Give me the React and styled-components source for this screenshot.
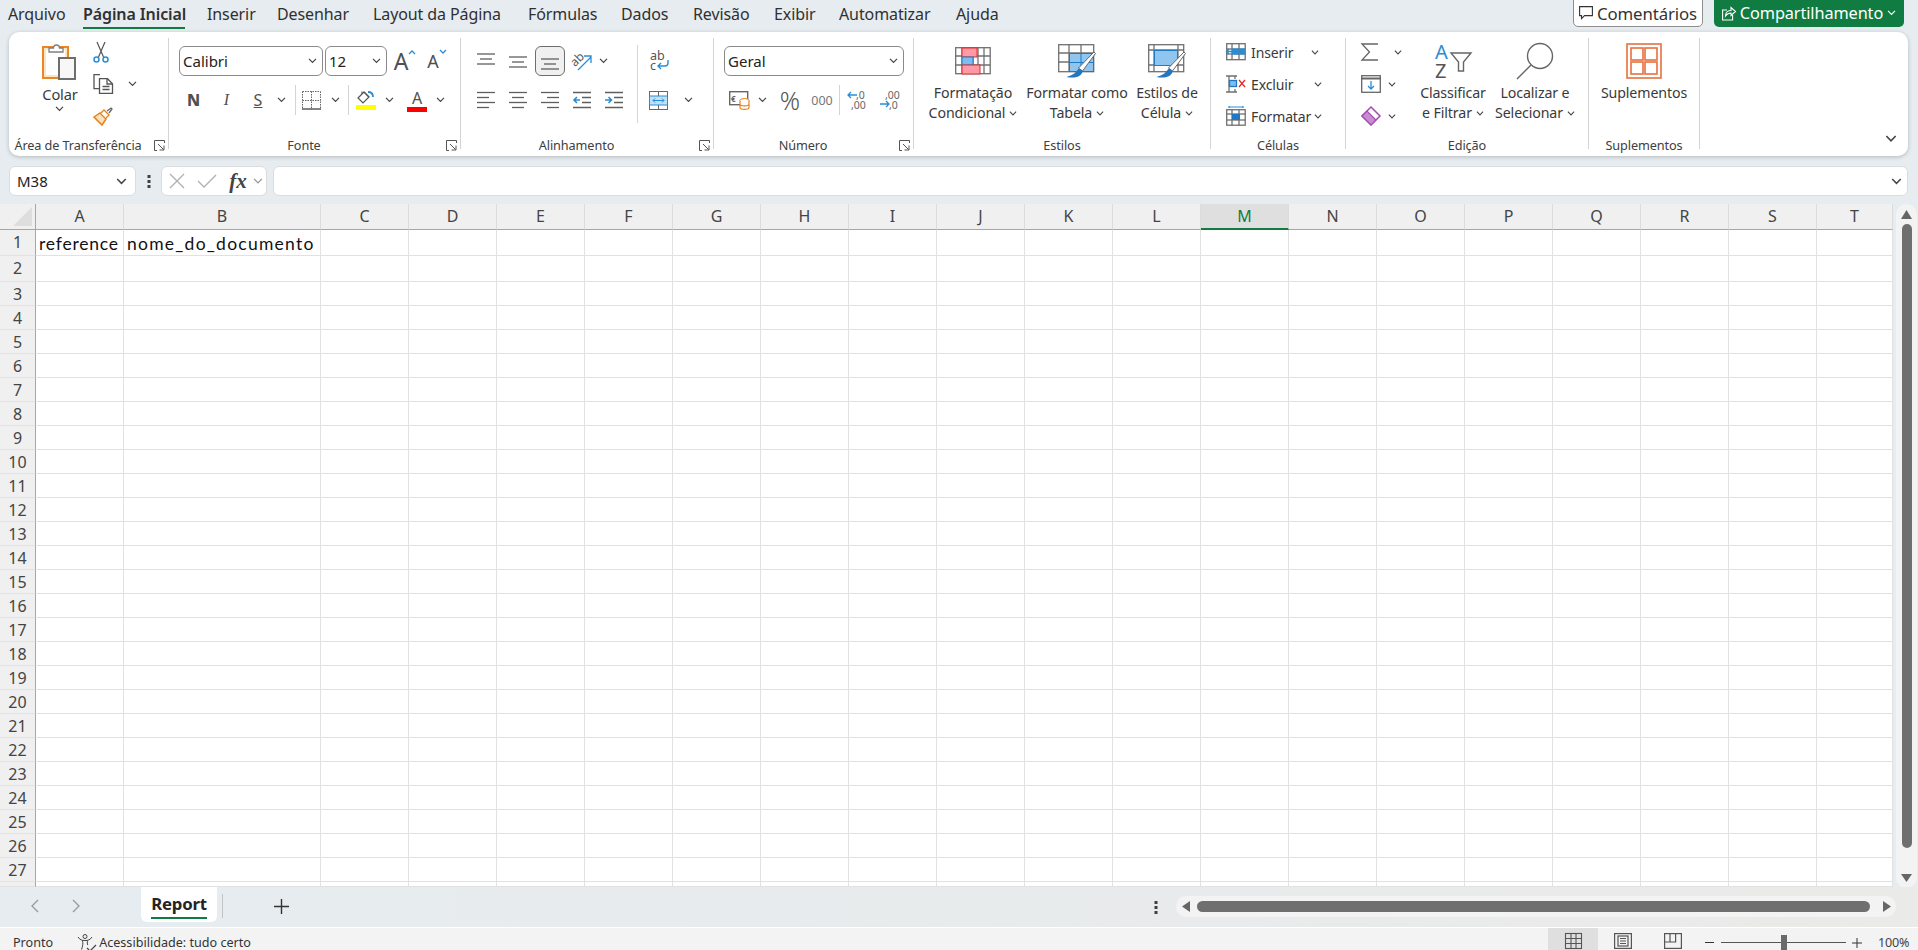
import React from 'react';
import styled, { createGlobalStyle } from 'styled-components';

const GlobalStyle = createGlobalStyle`
  html, body { margin: 0; padding: 0; background: #e6ecf0; }
  * { box-sizing: border-box; }
  svg { overflow: visible; flex: none; }
`;

const UI = `"Noto Sans", "Open Sans", sans-serif`;

const Page = styled.div`
  width: 1918px;
  height: 950px;
  overflow: hidden;
  display: flex;
  flex-direction: column;
  background: #e6ecf0;
  font-family: ${UI};
  color: #333;
`;

/* tabs */
const TabBar = styled.div`
  height: 32px;
  display: flex;
  padding: 0 14px 0 8px;
`;
const TabItem = styled.div`
  width: ${p => p.$w}px;
  height: 29px;
  flex: none;
  margin-right: ${p => p.$mr}px;
  font-size: 16px;
  line-height: 28px;
  letter-spacing: -0.1px;
  white-space: nowrap;
  font-weight: ${p => (p.$active ? 600 : 400)};
  color: #303030;
  border-bottom: 2px solid ${p => (p.$active ? '#107c41' : 'transparent')};
`;
const Comments = styled.div`
  margin-left: auto;
  width: 130px;
  height: 28px;
  margin-top: -1px;
  background: #fff;
  border: 1px solid #8f8f8f;
  border-radius: 0 0 5px 5px;
  display: flex;
  align-items: center;
  justify-content: center;
  gap: 4px;
  font-size: 16.8px;
  letter-spacing: -0.1px;
`;
const Share = styled.div`
  margin-left: 11px;
  width: 190px;
  height: 28px;
  margin-top: -1px;
  background: #107c41;
  border-radius: 0 0 5px 5px;
  color: #fff;
  display: flex;
  align-items: center;
  justify-content: center;
  gap: 4px;
  font-size: 16.3px;
  letter-spacing: -0.1px;
  white-space: nowrap;
`;

/* ribbon */
const Ribbon = styled.div`
  margin: 0 10px 0 9px;
  height: 124px;
  background: #fff;
  border-radius: 10px;
  box-shadow: 0 1px 4px rgba(0, 0, 0, 0.22);
  display: flex;
  padding-top: 6px;
`;
const Group = styled.section`
  width: ${p => p.$w}px;
  height: 111px;
  flex: none;
  display: flex;
  flex-direction: column;
  border-right: 1px solid #d4d4d4;
`;
const GroupBody = styled.div`
  flex: 1;
  min-height: 0;
  display: flex;
`;
const LabelRow = styled.div`
  height: 14px;
  margin-bottom: -3px;
  display: flex;
  align-items: center;
  flex: none;
`;
const GroupLabel = styled.div`
  flex: 1;
  text-align: center;
  font-size: 12.7px;
  letter-spacing: -0.1px;
  line-height: 14px;
  color: #404040;
  white-space: nowrap;
`;
const Launcher = styled.div`
  width: 11px;
  height: 11px;
  margin: 0 3px 0 7px;
  display: flex;
`;
const Stack = styled.div`
  display: flex;
  flex-direction: column;
  padding-left: ${p => p.$pl || 0}px;
  padding-top: ${p => p.$pt || 0}px;
  width: ${p => (p.$w ? `${p.$w}px` : 'auto')};
  flex: none;
`;
const Row = styled.div`
  display: flex;
  align-items: center;
  height: ${p => p.$h}px;
  margin-top: ${p => p.$mt || 0}px;
  padding-left: ${p => p.$pl || 0}px;
`;
const Tool = styled.div`
  width: ${p => p.$w}px;
  height: ${p => (p.$sel ? 30 : 28)}px;
  flex: none;
  display: flex;
  align-items: center;
  justify-content: center;
  margin-left: ${p => p.$ml || 0}px;
  background: ${p => (p.$sel ? '#f0f0f0' : 'transparent')};
  border: ${p => (p.$sel ? '1px solid #6e6e6e' : 'none')};
  border-radius: ${p => (p.$sel ? '6px' : '0')};
`;
const VSep = styled.div`
  width: 1px;
  height: ${p => p.$h}px;
  background: #d4d4d4;
  flex: none;
  margin-left: ${p => p.$ml || 0}px;
`;
const Select = styled.div`
  width: ${p => p.$w}px;
  height: 30px;
  flex: none;
  margin-left: ${p => p.$ml || 0}px;
  border: 1px solid #8a8a8a;
  border-radius: 6px;
  display: flex;
  align-items: center;
  justify-content: space-between;
  padding: 0 5px 0 3px;
  font-size: 15px;
  color: #222;
`;
const BoldLetter = styled.span`
  font-size: 16px;
  font-weight: ${p => (p.$bold ? 800 : 400)};
  font-style: ${p => (p.$italic ? 'italic' : 'normal')};
  font-family: ${p => (p.$italic ? `"Liberation Serif", serif` : UI)};
  text-decoration: ${p => (p.$under ? 'underline' : 'none')};
  color: #505050;
`;
const GrowA = styled.span`
  font-size: ${p => p.$s}px;
  line-height: 24px;
  color: #505050;
  display: flex;
  align-items: flex-start;
`;
const Percent = styled.span`
  font-size: 25px;
  font-weight: 300;
  color: #555;
`;
const Thousands = styled.span`
  font-size: 12.5px;
  color: #777;
`;
const ColorA = styled.div`
  display: flex;
  flex-direction: column;
  align-items: center;
  width: 20px;
  font-size: 16px;
  line-height: 18px;
  color: #505050;
`;
const ColorBar = styled.div`
  width: 20px;
  height: 5px;
  background: ${p => p.$c};
`;
const FillBox = styled.div`
  display: flex;
  flex-direction: column;
  align-items: center;
`;
const BigColumn = styled.div`
  width: ${p => p.$w}px;
  flex: none;
  display: flex;
  flex-direction: column;
  align-items: center;
`;
const BigIcon = styled.div`
  height: 45px;
  display: flex;
  align-items: center;
  justify-content: center;
`;
const BigText = styled.div`
  font-size: 14.2px;
  line-height: 20px;
  letter-spacing: -0.12px;
  color: #3a3a3a;
  white-space: nowrap;
  display: flex;
  align-items: center;
  gap: 4px;
`;
const PasteText = styled(BigText)`
  font-size: 14.6px;
  line-height: 22px;
  margin-top: 3px;
  margin-bottom: 1px;
  margin-left: 2px;
`;
const CellAction = styled.div`
  display: flex;
  align-items: center;
  height: 28px;
  margin-bottom: 4px;
`;
const CellText = styled.div`
  width: ${p => p.$w}px;
  margin-left: 5px;
  font-size: 14px;
  letter-spacing: -0.12px;
  color: #3a3a3a;
`;
const ChevPad = styled.div`
  margin-left: ${p => p.$ml || 0}px;
  display: flex;
`;
const CollapseBtn = styled.div`
  margin-left: auto;
  align-self: flex-end;
  padding: 0 11px 14px 0;
  display: flex;
`;

/* formula bar */
const FormulaBar = styled.div`
  margin: 10px 10px 0 9px;
  height: 30px;
  display: flex;
  align-items: stretch;
`;
const Box = styled.div`
  background: #fff;
  border: 1px solid #dcdcdc;
  border-radius: 6px;
  display: flex;
  align-items: center;
`;
const NameBox = styled(Box)`
  width: 127px;
  padding: 0 8px 0 7px;
  justify-content: space-between;
  font-size: 15px;
  color: #222;
`;
const DotsWrap = styled.div`
  width: 25px;
  display: flex;
  align-items: center;
  justify-content: center;
`;
const FxBox = styled(Box)`
  width: 106px;
`;
const FxText = styled.span`
  font-family: "Liberation Serif", serif;
  font-style: italic;
  font-weight: 700;
  font-size: 21px;
  color: #444;
`;
const FormulaInput = styled(Box)`
  flex: 1;
  margin-left: 6px;
  justify-content: flex-end;
  padding-right: 5px;
`;

/* sheet */
const SheetArea = styled.div`
  margin-top: 8px;
  height: 683px;
  display: flex;
`;
const Cells = styled.div`
  width: 1893px;
  height: 683px;
  display: grid;
  grid-template-columns: 36px 88px 197px repeat(17, 88px) 76px;
  grid-template-rows: 26px 26px 26px repeat(25, 24px) 5px;
  background: #fff;
  overflow: hidden;
`;
const Corner = styled.div`
  background: #f0f0f0;
  border-right: 1px solid #a6a6a6;
  border-bottom: 1px solid #a6a6a6;
  display: flex;
  align-items: flex-end;
  justify-content: flex-end;
  padding: 0 3px 3px 0;
`;
const ColHead = styled.div`
  background: ${p => (p.$sel ? '#dfdfdf' : '#f0f0f0')};
  border-right: 1px solid #dcdcdc;
  border-bottom: ${p => (p.$sel ? '2px solid #107c41' : '1px solid #a6a6a6')};
  color: ${p => (p.$sel ? '#107c41' : '#444')};
  font-size: 16px;
  text-align: center;
  line-height: 25px;
`;
const RowHead = styled.div`
  background: #f0f0f0;
  border-right: 1px solid #a6a6a6;
  border-bottom: 1px solid #e2e2e2;
  color: #444;
  font-size: 16px;
  text-align: center;
  line-height: 25px;
  overflow: hidden;
`;
const Cell = styled.div`
  border-right: 1px solid #e1e1e1;
  border-bottom: 1px solid #e1e1e1;
  font-family: "Lato", "Liberation Sans", sans-serif;
  font-size: 17.5px;
  letter-spacing: ${p => p.$ls || 0.8}px;
  line-height: 27px;
  padding-left: 3px;
  color: #111;
  white-space: nowrap;
`;
const VTrack = styled.div`
  width: 21px;
  margin-left: 3px;
  height: 684px;
  background: #f3f3f3;
  border-radius: 11px;
  display: flex;
  flex-direction: column;
  align-items: center;
  padding: 6px 0 5px;
`;
const VThumb = styled.div`
  width: 10px;
  flex: 1;
  margin: 5px 0 26px;
  background: #6f6f6f;
  border-radius: 5px;
`;

/* sheet tabs */
const SheetBar = styled.div`
  height: 40px;
  display: flex;
  align-items: flex-start;
  background: linear-gradient(90deg, #e6ecf0 0%, #e8ebec 55%, #eaeae8 100%);
`;
const NavArrow = styled.div`
  margin-left: ${p => p.$ml}px;
  margin-top: 12px;
  display: flex;
`;
const SheetTab = styled.div`
  width: 76px;
  height: 35px;
  margin-left: 61px;
  background: #fff;
  border-radius: 0 0 6px 6px;
  display: flex;
  justify-content: center;
`;
const SheetName = styled.div`
  height: 32px;
  width: 56px;
  line-height: 33px;
  text-align: center;
  font-size: 16.8px;
  font-weight: 700;
  letter-spacing: -0.2px;
  color: #242424;
  border-bottom: 2px solid #107c41;
`;
const TabSep = styled.div`
  width: 1px;
  height: 24px;
  margin: 7px 0 0 5px;
  background: #c4c4c4;
`;
const AddSheet = styled.div`
  margin: 12px 0 0 51px;
  display: flex;
`;
const BarDots = styled.div`
  margin: 14px 0 0 865px;
  display: flex;
`;
const HTrack = styled.div`
  width: 720px;
  height: 21px;
  margin: 9px 0 0 18px;
  background: #f3f3f3;
  border-radius: 11px;
  display: flex;
  align-items: center;
  padding: 0 5px 0 6px;
`;
const HThumb = styled.div`
  flex: 1;
  height: 11px;
  margin: 0 13px 0 7px;
  background: #6f6f6f;
  border-radius: 6px;
`;

/* status */
const StatusBar = styled.div`
  height: 23px;
  border-top: 1px solid #fff;
  background: #f3f3f3;
  display: flex;
  align-items: center;
  padding: 7px 0 0 13px;
  font-size: 12.6px;
  color: #333;
`;
const StatusAcc = styled.div`
  margin-left: 24px;
  display: flex;
  align-items: center;
  gap: 2px;
`;
const ViewBtn = styled.div`
  width: 50px;
  flex: none;
  display: flex;
  align-items: center;
  justify-content: center;
  padding-top: 3px;
  background: ${p => (p.$on ? '#dfdfdf' : 'transparent')};
`;
const ViewGroup = styled.div`
  margin-left: auto;
  margin-top: -7px;
  align-self: stretch;
  display: flex;
`;
const ZoomSign = styled.div`
  width: ${p => p.$w}px;
  display: flex;
  justify-content: center;
  flex: none;
`;
const Slider = styled.div`
  width: 125px;
  height: 1px;
  background: #555;
  position: relative;
  flex: none;
`;
const SliderKnob = styled.div`
  position: absolute;
  left: 60px;
  top: -7px;
  width: 6px;
  height: 15px;
  background: #6a6a6a;
`;
const ZoomValue = styled.div`
  width: 50px;
  padding-left: 10px;
  flex: none;
  letter-spacing: -0.2px;
  color: #444;
`;

const GRAY = '#5f5f5f';
const BLUE = '#2a8dd4';

const Chev = ({ s = 9, c = '#444' }) => (
  <svg width={s} height={s * 0.6} viewBox="0 0 9 5.4" fill="none" stroke={c} strokeWidth="1.2">
    <path d="M1 .8l3.5 3.6L8 .8" />
  </svg>
);

const LauncherIcon = () => (
  <svg width="11" height="11" viewBox="0 0 11 11" fill="none" stroke="#555" strokeWidth="1">
    <path d="M10.5 3V.5H.5v10H3M4 4l5.5 5.5M10 5.5V10H5.5" />
  </svg>
);

const PasteIcon = () => (
  <svg width="34" height="38" viewBox="0 0 34 38" fill="none">
    <rect x="1" y="5" width="25" height="31" fill="#fbe6be" stroke="#e8872a" strokeWidth="2" />
    <rect x="4" y="8" width="19" height="25" fill="#fff" />
    <path d="M7 10V6h4.500c0-4 6-4 6 0H21v4z" fill="#fff" stroke="#808080" strokeWidth="1.300" />
    <rect x="17" y="16" width="16" height="21" fill="#f7f7f7" stroke="#6e6e6e" strokeWidth="2" />
  </svg>
);
const ScissorsIcon = () => (
  <svg width="16" height="21" viewBox="0 0 16 21" fill="none">
    <path d="M4 0l6.500 15M12 0L5.500 15" stroke="#555" strokeWidth="1.200" />
    <circle cx="3.500" cy="17.500" r="2.500" stroke={BLUE} strokeWidth="1.500" />
    <circle cx="12.500" cy="17.500" r="2.500" stroke={BLUE} strokeWidth="1.500" />
  </svg>
);
const CopyIcon = () => (
  <svg width="20" height="20" viewBox="0 0 20 20" fill="none" stroke="#555" strokeWidth="1.300">
    <path d="M7 .7H1v14h5" />
    <path d="M6.500 4.700h8l5 5v9.600h-13z" fill="#fff" />
    <path d="M14 5v5h5M9.500 12.500h7M9.500 15.500h7" />
  </svg>
);
const BrushIcon = () => (
  <svg width="20" height="19" viewBox="0 0 20 19" fill="none">
    <path d="M1 10l6-4 6 6-4 6z" fill="#fbe2bf" stroke="#e8811a" strokeWidth="1.500" />
    <path d="M8 6l3-3 5 5-3 3" fill="#fff" stroke="#e8811a" strokeWidth="1.300" />
    <path d="M14 4l4-3 1 1-3 4" stroke="#666" strokeWidth="1.300" />
  </svg>
);
const BordersIcon = () => (
  <svg width="19" height="19" viewBox="0 0 19 19" fill="none" stroke="#666" strokeWidth="1">
    <path d="M.500.500h18M.500.500v18M18.500.500v18M.500 9.500h18M9.500.500v18" strokeDasharray="1.500 1" />
    <path d="M0 18h19" strokeWidth="1.600" />
  </svg>
);
const FillIcon = () => (
  <svg width="20" height="15" viewBox="0 0 20 15" fill="none">
    <path d="M8 2L2 8l5 5 6-6z" stroke="#555" strokeWidth="1.200" />
    <path d="M6 4V1.500M8 2l5 5" stroke="#555" strokeWidth="1.200" />
    <path d="M12 2c3 0 5 2 5 5" stroke={BLUE} strokeWidth="1.800" />
  </svg>
);
const Hlines = ({ rows, c = GRAY }) => (
  <svg width="18" height="18" viewBox="0 0 18 18" fill="none" stroke={c} strokeWidth="1.300">
    {rows.map(([a, b, y], i) => <path key={i} d={`M${a} ${y}H${b}`} />)}
  </svg>
);
const IndentIcon = ({ rev }) => (
  <svg width="18" height="18" viewBox="0 0 18 18" fill="none" strokeWidth="1.300">
    <path d="M0 1.500h18M9 6.500h9M9 11.500h9M0 16.500h18" stroke={GRAY} />
    {rev
      ? <path d="M7 9H1M4 6L1 9l3 3" stroke={BLUE} strokeWidth="1.600" />
      : <path d="M0 9h6M3.500 6l3 3-3 3" stroke={BLUE} strokeWidth="1.600" />}
  </svg>
);
const OrientIcon = () => (
  <svg width="22" height="20" viewBox="0 0 22 20" fill="none">
    <text x="0" y="13" fontSize="12" fill="#555" fontFamily={UI} transform="rotate(-45 6 10)">ab</text>
    <path d="M7 19L20 6M13 5h7v7" stroke={BLUE} strokeWidth="1.300" />
  </svg>
);
const WrapIcon = () => (
  <svg width="20" height="20" viewBox="0 0 20 20" fill="none">
    <text fontSize="12.500" fill="#555" fontFamily={UI}>
      <tspan x="0" y="9">ab</tspan>
      <tspan x="0" y="19">c</tspan>
    </text>
    <path d="M18 9v3c0 2-1 3-3 3H8M11 12l-3 3 3 3" stroke={BLUE} strokeWidth="1.400" />
  </svg>
);
const MergeIcon = () => (
  <svg width="19" height="19" viewBox="0 0 19 19" fill="none">
    <rect x=".500" y=".500" width="18" height="18" stroke="#666" />
    <rect x=".500" y="5" width="18" height="9" fill="#bfe0f5" stroke={BLUE} />
    <path d="M4 9.500h11M6 7.500l-2 2 2 2M13 7.500l2 2-2 2" stroke={BLUE} strokeWidth="1" />
    <path d="M9.500 0v5M9.500 14v5" stroke="#666" />
  </svg>
);
const AccountingIcon = () => (
  <svg width="21" height="19" viewBox="0 0 21 19" fill="none">
    <rect x=".700" y=".700" width="18" height="13" stroke="#666" strokeWidth="1.400" />
    <text x="2" y="11" fontSize="8" fontWeight="700" fill="#666" fontFamily={UI}>€</text>
    <ellipse cx="15.500" cy="9.500" rx="4.500" ry="2" fill="#fff" stroke="#e8811a" />
    <path d="M11 9.500v7c0 2.500 9 2.500 9 0v-7M11 13c0 2.500 9 2.500 9 0" fill="#fff" stroke="#e8811a" strokeWidth="1.200" />
  </svg>
);
const DecimalIcon = ({ more }) => (
  <svg width="20" height="20" viewBox="0 0 20 20" fill="none">
    <text fontSize="10.500" fill="#666" fontFamily={UI}>
      <tspan x={more ? 5 : 9} y="8.500">{more ? ',00' : ',0'}</tspan>
      <tspan x={more ? 9 : 4} y="19">{more ? ',0' : ',00'}</tspan>
    </text>
    {more
      ? <path d="M0 14h9M6 11l3 3-3 3" stroke={BLUE} strokeWidth="1.300" />
      : <path d="M10 5H1M4 2L1 5l3 3" stroke={BLUE} strokeWidth="1.300" />}
  </svg>
);
const SheetGrid = ({ w, h, xs, ys }) => (
  <g stroke="#707070" strokeWidth="1.300" fill="none">
    <rect x=".700" y=".700" width={w} height={h} />
    {xs.map(x => <path key={x} d={`M${x} 0v${h + 1}`} />)}
    {ys.map(y => <path key={y} d={`M0 ${y}h${w + 1}`} />)}
  </g>
);
const CondIcon = () => (
  <svg width="36" height="28" viewBox="0 0 36 28">
    <SheetGrid w={34.500} h={26} xs={[7, 18, 23, 29]} ys={[9, 18]} />
    <rect x="7" y="1" width="15" height="9" fill="#ff9aa6" stroke="#e22c2c" />
    <rect x="7" y="10" width="11" height="8" fill="#7fbdf0" stroke="#1f7ac4" />
    <rect x="7" y="18" width="18" height="9" fill="#ff9aa6" stroke="#e22c2c" />
  </svg>
);
const PaintStroke = () => (
  <g>
    <path d="M36 8l1.500 1.500L24.500 27 20.500 24z" fill="#fff" stroke="#666" strokeWidth="1" />
    <path d="M20.500 24.500c-2 4-6 7-12 8.500 4 1 11 1 14-2 1.500-1 2-3 2-4.500z" fill="#2278c0" />
  </g>
);
const TableIcon = () => (
  <svg width="38" height="34" viewBox="0 0 38 34">
    <SheetGrid w={35} h={27} xs={[11, 23]} ys={[9, 18]} />
    <rect x="11.500" y="9.500" width="24" height="18" fill="#8fc5ef" stroke="#1f7ac4" />
    <path d="M23 9.500v18M11.500 18.500h24" stroke="#1f7ac4" />
    <PaintStroke />
  </svg>
);
const StyleIcon = () => (
  <svg width="38" height="34" viewBox="0 0 38 34">
    <SheetGrid w={35} h={27} xs={[6, 30]} ys={[6, 21]} />
    <rect x="6.500" y="6.500" width="23" height="15" fill="#8fc5ef" stroke="#1f7ac4" />
    <PaintStroke />
  </svg>
);
const InsertIcon = () => (
  <svg width="20" height="18" viewBox="0 0 20 18">
    <SheetGrid w={18.500} h={16} xs={[6, 13]} ys={[6, 11]} />
    <rect x="6" y="5.500" width="13" height="6" fill="#2a8dd4" />
    <path d="M9 8.500H0M3 6L.5 8.500 3 11" fill="none" stroke="#2a8dd4" strokeWidth="1.400" />
  </svg>
);
const DeleteIcon = () => (
  <svg width="20" height="18" viewBox="0 0 20 18" fill="none">
    <path d="M0 1h11M0 17h11M3 1v16M9 1v3M9 14v3" stroke="#707070" strokeWidth="1.300" />
    <rect x="3.500" y="5.500" width="7" height="6" fill="#7fbdf0" stroke="#1f7ac4" strokeWidth="1.300" />
    <path d="M13 5l6 7M19 5l-6 7" stroke="#e22c2c" strokeWidth="1.300" />
  </svg>
);
const FormatCellIcon = () => (
  <svg width="20" height="20" viewBox="0 0 20 20">
    <path d="M3 1h14M3 0v2M17 0v2" stroke={BLUE} strokeWidth="1.200" fill="none" />
    <g transform="translate(0 3)">
      <SheetGrid w={18.500} h={15.500} xs={[6, 13]} ys={[5, 11]} />
      <rect x="6" y="5" width="8" height="6" fill="#2278c0" />
    </g>
  </svg>
);
const SigmaIcon = () => (
  <svg width="18" height="18" viewBox="0 0 18 18" fill="none" stroke="#666" strokeWidth="1.300">
    <path d="M17 1H1l7.500 8L1 17h16" />
  </svg>
);
const FillDownIcon = () => (
  <svg width="20" height="18" viewBox="0 0 20 18" fill="none">
    <rect x=".700" y=".700" width="18.600" height="16.600" stroke="#666" strokeWidth="1.300" />
    <path d="M0 3.500h20" stroke="#666" strokeWidth="2" />
    <path d="M10 6v8M7 11l3 3 3-3" stroke={BLUE} strokeWidth="1.300" />
  </svg>
);
const EraserIcon = () => (
  <svg width="20" height="20" viewBox="0 0 20 20" fill="none">
    <path d="M10 1l9 9-9 9-9-9z" fill="#fff" stroke="#a44db0" strokeWidth="1.500" />
    <path d="M1 10l5-5 9 9-5 5z" fill="#c98bd2" stroke="#a44db0" strokeWidth="1.200" />
  </svg>
);
const SortIcon = () => (
  <svg width="38" height="38" viewBox="0 0 38 38" fill="none">
    <text fontSize="20" fontFamily={UI}>
      <tspan x="1" y="17" fill={BLUE}>A</tspan>
      <tspan x="1" y="36" fill="#555">Z</tspan>
    </text>
    <path d="M17 11h20l-7.500 9v9h-5v-9z" fill="#fff" stroke="#666" strokeWidth="1.400" />
  </svg>
);
const FindIcon = () => (
  <svg width="38" height="38" viewBox="0 0 38 38" fill="none" stroke="#666" strokeWidth="1.400">
    <circle cx="24" cy="14" r="12.500" />
    <path d="M15 23L1 37" />
  </svg>
);
const AddinIcon = () => (
  <svg width="36" height="36" viewBox="0 0 36 36" fill="none" stroke="#e8703f" strokeWidth="1.600">
    <rect x="1" y="1" width="34" height="34" />
    <rect x="5" y="5" width="12" height="12" />
    <rect x="19" y="5" width="12" height="12" />
    <rect x="5" y="19" width="12" height="12" />
    <rect x="19" y="19" width="12" height="12" />
  </svg>
);
const CommentIcon = () => (
  <svg width="14" height="14" viewBox="0 0 14 14" fill="none" stroke="#333" strokeWidth="1.100">
    <path d="M.6.600h12.800v9H5.500l-3 3v-3H.6z" />
  </svg>
);
const ShareIcon = () => (
  <svg width="14" height="15" viewBox="0 0 14 15" fill="none" stroke="#fff" strokeWidth="1.100">
    <path d="M5 4H.6v10h10V9" />
    <path d="M3.500 10c0-4 3-5.500 5.500-5.500V1.500l4.500 4-4.500 4V7c-2.500 0-4 1-5.500 3z" />
  </svg>
);
const CrossMark = () => (
  <svg width="16" height="16" viewBox="0 0 16 16" stroke="#b0b0b0" strokeWidth="1.300"><path d="M1 1l14 14M15 1L1 15" /></svg>
);
const CheckMark = () => (
  <svg width="20" height="14" viewBox="0 0 20 14" fill="none" stroke="#b0b0b0" strokeWidth="1.300"><path d="M1 7l6 6L19 1" /></svg>
);
const Dots = () => (
  <svg width="4" height="13" viewBox="0 0 4 13" fill="#404040">
    <rect width="3" height="3" x=".500" /><rect width="3" height="3" x=".500" y="5" /><rect width="3" height="3" x=".500" y="10" />
  </svg>
);
const NavIcon = ({ right }) => (
  <svg width="8" height="14" viewBox="0 0 8 14" fill="none" stroke="#9a9a9a" strokeWidth="1.300">
    <path d={right ? 'M1 1l6 6-6 6' : 'M7 1L1 7l6 6'} />
  </svg>
);
const PlusIcon = ({ s = 15, c = '#333', w = 1.400 }) => (
  <svg width={s} height={s} viewBox="0 0 15 15" stroke={c} strokeWidth={w}><path d="M7.500 0v15M0 7.500h15" /></svg>
);
const Triangle = ({ dir }) => {
  const d = { up: 'M0 9L5.500 0 11 9z', down: 'M0 0h11L5.500 8z', left: 'M8 0v11L0 5.500z', right: 'M0 0v11l8-5.500z' }[dir];
  const vertical = dir === 'up' || dir === 'down';
  return (
    <svg width={vertical ? 11 : 8} height={vertical ? 9 : 11} viewBox={vertical ? '0 0 11 9' : '0 0 8 11'} fill="#666"><path d={d} /></svg>
  );
};
const AccessIcon = () => (
  <svg width="20" height="18" viewBox="0 0 20 18" fill="none" stroke="#444" strokeWidth="1">
    <circle cx="8" cy="2.500" r="2" />
    <path d="M1 3c2 3 4 3.500 7 3.500S13 6 15 3M5.500 6.500c.5 3 .5 5-1 9M10.500 6.500c-.3 2-.2 3 .2 4.500" />
    <path d="M10 14l3 3 6-6" strokeWidth="1.200" />
  </svg>
);
const NormalView = () => (
  <svg width="17" height="16" viewBox="0 0 17 16" fill="none" stroke="#555" strokeWidth="1.100">
    <rect x=".500" y=".500" width="16" height="15" />
    <path d="M.500 5.500h16M.500 10.500h16M6 .500v15M11 .500v15" />
  </svg>
);
const LayoutView = () => (
  <svg width="18" height="16" viewBox="0 0 18 16" fill="none" stroke="#555" strokeWidth="1.200">
    <rect x=".600" y=".600" width="16.800" height="14.800" />
    <rect x="4" y="3" width="10" height="10" />
    <path d="M6 5.500h6M6 8h6M6 10.500h6" />
  </svg>
);
const BreakView = () => (
  <svg width="18" height="16" viewBox="0 0 18 16" fill="none" stroke="#555" strokeWidth="1.200">
    <rect x=".600" y=".600" width="16.800" height="14.800" />
    <path d="M.600 9h11V.600M6 .600V9" />
  </svg>
);

const TABS = [
  ['Arquivo', 58, 17],
  ['Página Inicial', 102, 22, true],
  ['Inserir', 47, 23],
  ['Desenhar', 72, 24],
  ['Layout da Página', 131, 24],
  ['Fórmulas', 69, 24],
  ['Dados', 48, 24],
  ['Revisão', 57, 24],
  ['Exibir', 41, 24],
  ['Automatizar', 94, 23],
  ['Ajuda', 44, 0],
];

const COLS = 'ABCDEFGHIJKLMNOPQRST'.split('');
const ROWS = Array.from({ length: 27 }, (_, i) => i + 1);

function Sheet() {
  return (
    <Cells>
      <Corner>
        <svg width="19" height="19" viewBox="0 0 19 19" fill="#dedede"><path d="M19 0v19H0z" /></svg>
      </Corner>
      {COLS.map(c => <ColHead key={c} $sel={c === 'M'}>{c}</ColHead>)}
      {ROWS.map(r => (
        <React.Fragment key={r}>
          <RowHead>{r}</RowHead>
          {COLS.map((c, i) => (
            r === 1 && i === 0 ? <Cell key={c}>reference</Cell>
              : r === 1 && i === 1 ? <Cell key={c} $ls={1.25}>nome_do_documento</Cell>
              : <Cell key={c} />
          ))}
        </React.Fragment>
      ))}
      <RowHead />
      {COLS.map(c => <Cell key={c} />)}
    </Cells>
  );
}

function App() {
  return (
    <Page>
      <GlobalStyle />
      <TabBar>
        {TABS.map(([t, w, mr, active]) => <TabItem key={t} $w={w} $mr={mr} $active={active}>{t}</TabItem>)}
        <Comments><CommentIcon />Comentários</Comments>
        <Share><ShareIcon />Compartilhamento <Chev c="#fff" /></Share>
      </TabBar>

      <Ribbon>
        <Group $w={160}>
          <GroupBody>
            <Stack $pl={24} $pt={4} $w={84}>
              <BigColumn $w={52}>
                <PasteIcon />
                <PasteText>Colar</PasteText>
                <ChevPad><Chev /></ChevPad>
              </BigColumn>
            </Stack>
            <Stack $pt={2}>
              <Row $h={24}><ScissorsIcon /></Row>
              <Row $h={24} $mt={8}><CopyIcon /><ChevPad $ml={15}><Chev /></ChevPad></Row>
              <Row $h={24} $mt={8}><BrushIcon /></Row>
            </Stack>
          </GroupBody>
          <LabelRow><GroupLabel>Área de Transferência</GroupLabel><Launcher><LauncherIcon /></Launcher></LabelRow>
        </Group>

        <Group $w={292}>
          <GroupBody>
            <Stack $pt={8} $pl={10}>
              <Row $h={30}>
                <Select $w={144}>Calibri<Chev /></Select>
                <Select $w={62} $ml={2}>12<Chev /></Select>
                <Tool $w={36}><GrowA $s={23}>A<svg width="8" height="6" viewBox="0 0 8 6" fill="none" stroke={BLUE} strokeWidth="1.300"><path d="M1 5l3-3 3 3" /></svg></GrowA></Tool>
                <Tool $w={28}><GrowA $s={18}>A<svg width="8" height="6" viewBox="0 0 8 6" fill="none" stroke={BLUE} strokeWidth="1.300"><path d="M1 1l3 3 3-3" /></svg></GrowA></Tool>
              </Row>
              <Row $h={28} $mt={10}>
                <Tool $w={33} $ml={-2}><BoldLetter $bold>N</BoldLetter></Tool>
                <Tool $w={33}><BoldLetter $italic>I</BoldLetter></Tool>
                <Tool $w={30}><BoldLetter $under>S</BoldLetter></Tool>
                <Tool $w={16}><Chev /></Tool>
                <VSep $h={30} $ml={6} />
                <Tool $w={31}><BordersIcon /></Tool>
                <Tool $w={16}><Chev /></Tool>
                <VSep $h={30} $ml={5} />
                <Tool $w={34}><FillBox><FillIcon /><ColorBar $c="#ffff00" /></FillBox></Tool>
                <Tool $w={12}><Chev /></Tool>
                <Tool $w={26} $ml={9}><ColorA>A<ColorBar $c="#ff0000" /></ColorA></Tool>
                <Tool $w={20}><Chev /></Tool>
              </Row>
            </Stack>
          </GroupBody>
          <LabelRow><GroupLabel>Fonte</GroupLabel><Launcher><LauncherIcon /></Launcher></LabelRow>
        </Group>

        <Group $w={253}>
          <GroupBody>
            <Stack $pt={8} $pl={9} $w={176}>
              <Row $h={30}>
                <Tool $w={32}><Hlines rows={[[0, 18, 2], [3, 15, 7], [0, 18, 12]]} /></Tool>
                <Tool $w={32}><Hlines rows={[[0, 18, 5], [3, 15, 10], [0, 18, 15]]} /></Tool>
                <Tool $w={30} $ml={1} $sel><Hlines rows={[[0, 18, 7], [3, 15, 12], [0, 18, 17]]} /></Tool>
                <Tool $w={32} $ml={1}><OrientIcon /></Tool>
                <Tool $w={12} $ml={-1}><Chev /></Tool>
              </Row>
              <Row $h={28} $mt={10}>
                <Tool $w={32}><Hlines rows={[[0, 18, 1.500], [0, 12, 6.500], [0, 18, 11.500], [0, 12, 16.500]]} /></Tool>
                <Tool $w={32}><Hlines rows={[[0, 18, 1.500], [3, 15, 6.500], [0, 18, 11.500], [3, 15, 16.500]]} /></Tool>
                <Tool $w={32}><Hlines rows={[[0, 18, 1.500], [6, 18, 6.500], [0, 18, 11.500], [6, 18, 16.500]]} /></Tool>
                <Tool $w={32}><IndentIcon rev /></Tool>
                <Tool $w={32}><IndentIcon /></Tool>
              </Row>
            </Stack>
            <Stack $pt={7}>
              <VSep $h={78} />
            </Stack>
            <Stack $pt={8}>
              <Row $h={30}><Tool $w={44}><WrapIcon /></Tool></Row>
              <Row $h={28} $mt={10}><Tool $w={40}><MergeIcon /></Tool><Tool $w={20}><Chev /></Tool></Row>
            </Stack>
          </GroupBody>
          <LabelRow><GroupLabel>Alinhamento</GroupLabel><Launcher><LauncherIcon /></Launcher></LabelRow>
        </Group>

        <Group $w={200}>
          <GroupBody>
            <Stack $pt={8} $pl={10}>
              <Row $h={30}><Select $w={180}>Geral<Chev /></Select></Row>
              <Row $h={28} $mt={10}>
                <Tool $w={30}><AccountingIcon /></Tool>
                <Tool $w={16}><Chev /></Tool>
                <Tool $w={36} $ml={2}><Percent>%</Percent></Tool>
                <Tool $w={28}><Thousands>000</Thousands></Tool>
                <VSep $h={30} $ml={3} />
                <Tool $w={34}><DecimalIcon /></Tool>
                <Tool $w={31}><DecimalIcon more /></Tool>
              </Row>
            </Stack>
          </GroupBody>
          <LabelRow><GroupLabel>Número</GroupLabel><Launcher><LauncherIcon /></Launcher></LabelRow>
        </Group>

        <Group $w={297}>
          <GroupBody>
            <Stack $pl={7}>
              <Row $h={98}>
                <BigColumn $w={104}>
                  <BigIcon><CondIcon /></BigIcon>
                  <BigText>Formatação</BigText>
                  <BigText>Condicional <Chev s={8} /></BigText>
                  <Row $h={13} />
                </BigColumn>
                <BigColumn $w={104}>
                  <BigIcon><TableIcon /></BigIcon>
                  <BigText>Formatar como</BigText>
                  <BigText>Tabela <Chev s={8} /></BigText>
                  <Row $h={13} />
                </BigColumn>
                <BigColumn $w={76}>
                  <BigIcon><StyleIcon /></BigIcon>
                  <BigText>Estilos de</BigText>
                  <BigText>Célula <Chev s={8} /></BigText>
                  <Row $h={13} />
                </BigColumn>
              </Row>
            </Stack>
          </GroupBody>
          <LabelRow><GroupLabel>Estilos</GroupLabel></LabelRow>
        </Group>

        <Group $w={135}>
          <GroupBody>
            <Stack $pl={15}>
              <CellAction><InsertIcon /><CellText $w={60}>Inserir</CellText><Chev s={8} /></CellAction>
              <CellAction><DeleteIcon /><CellText $w={63}>Excluir</CellText><Chev s={8} /></CellAction>
              <CellAction><FormatCellIcon /><CellText $w={63}>Formatar</CellText><Chev s={8} /></CellAction>
            </Stack>
          </GroupBody>
          <LabelRow><GroupLabel>Células</GroupLabel></LabelRow>
        </Group>

        <Group $w={243}>
          <GroupBody>
            <Stack $pl={15} $w={66}>
              <CellAction><SigmaIcon /><ChevPad $ml={15}><Chev s={8} /></ChevPad></CellAction>
              <CellAction><FillDownIcon /><ChevPad $ml={7}><Chev s={8} /></ChevPad></CellAction>
              <CellAction><EraserIcon /><ChevPad $ml={7}><Chev s={8} /></ChevPad></CellAction>
            </Stack>
            <BigColumn $w={82}>
              <BigIcon><SortIcon /></BigIcon>
              <BigText>Classificar</BigText>
              <BigText>e Filtrar <Chev s={8} /></BigText>
            </BigColumn>
            <BigColumn $w={82}>
              <BigIcon><FindIcon /></BigIcon>
              <BigText>Localizar e</BigText>
              <BigText>Selecionar <Chev s={8} /></BigText>
            </BigColumn>
          </GroupBody>
          <LabelRow><GroupLabel>Edição</GroupLabel></LabelRow>
        </Group>

        <Group $w={111}>
          <GroupBody>
            <BigColumn $w={110}>
              <BigIcon><AddinIcon /></BigIcon>
              <BigText>Suplementos</BigText>
            </BigColumn>
          </GroupBody>
          <LabelRow><GroupLabel>Suplementos</GroupLabel></LabelRow>
        </Group>

        <CollapseBtn><Chev s={12} /></CollapseBtn>
      </Ribbon>

      <FormulaBar>
        <NameBox>M38<Chev s={11} /></NameBox>
        <DotsWrap><Dots /></DotsWrap>
        <FxBox>
          <Tool $w={16} $ml={7}><CrossMark /></Tool>
          <Tool $w={20} $ml={12}><CheckMark /></Tool>
          <Tool $w={20} $ml={11}><FxText>fx</FxText></Tool>
          <Tool $w={10} $ml={5}><Chev s={10} c="#999" /></Tool>
        </FxBox>
        <FormulaInput><Chev s={11} /></FormulaInput>
      </FormulaBar>

      <SheetArea>
        <Sheet />
        <VTrack>
          <Triangle dir="up" />
          <VThumb />
          <Triangle dir="down" />
        </VTrack>
      </SheetArea>

      <SheetBar>
        <NavArrow $ml={31}><NavIcon /></NavArrow>
        <NavArrow $ml={33}><NavIcon right /></NavArrow>
        <SheetTab><SheetName>Report</SheetName></SheetTab>
        <TabSep />
        <AddSheet><PlusIcon /></AddSheet>
        <BarDots><Dots /></BarDots>
        <HTrack>
          <Triangle dir="left" />
          <HThumb />
          <Triangle dir="right" />
        </HTrack>
      </SheetBar>

      <StatusBar>
        Pronto
        <StatusAcc><AccessIcon />Acessibilidade: tudo certo</StatusAcc>
        <ViewGroup>
          <ViewBtn $on><NormalView /></ViewBtn>
          <ViewBtn><LayoutView /></ViewBtn>
          <ViewBtn><BreakView /></ViewBtn>
        </ViewGroup>
        <ZoomSign $w={23}><svg width="9" height="1" viewBox="0 0 9 1"><rect width="9" height="1" fill="#333" /></svg></ZoomSign>
        <Slider><SliderKnob /></Slider>
        <ZoomSign $w={22}><PlusIcon s={10} w={1.500} /></ZoomSign>
        <ZoomValue>100%</ZoomValue>
      </StatusBar>
    </Page>
  );
}

export default App;
